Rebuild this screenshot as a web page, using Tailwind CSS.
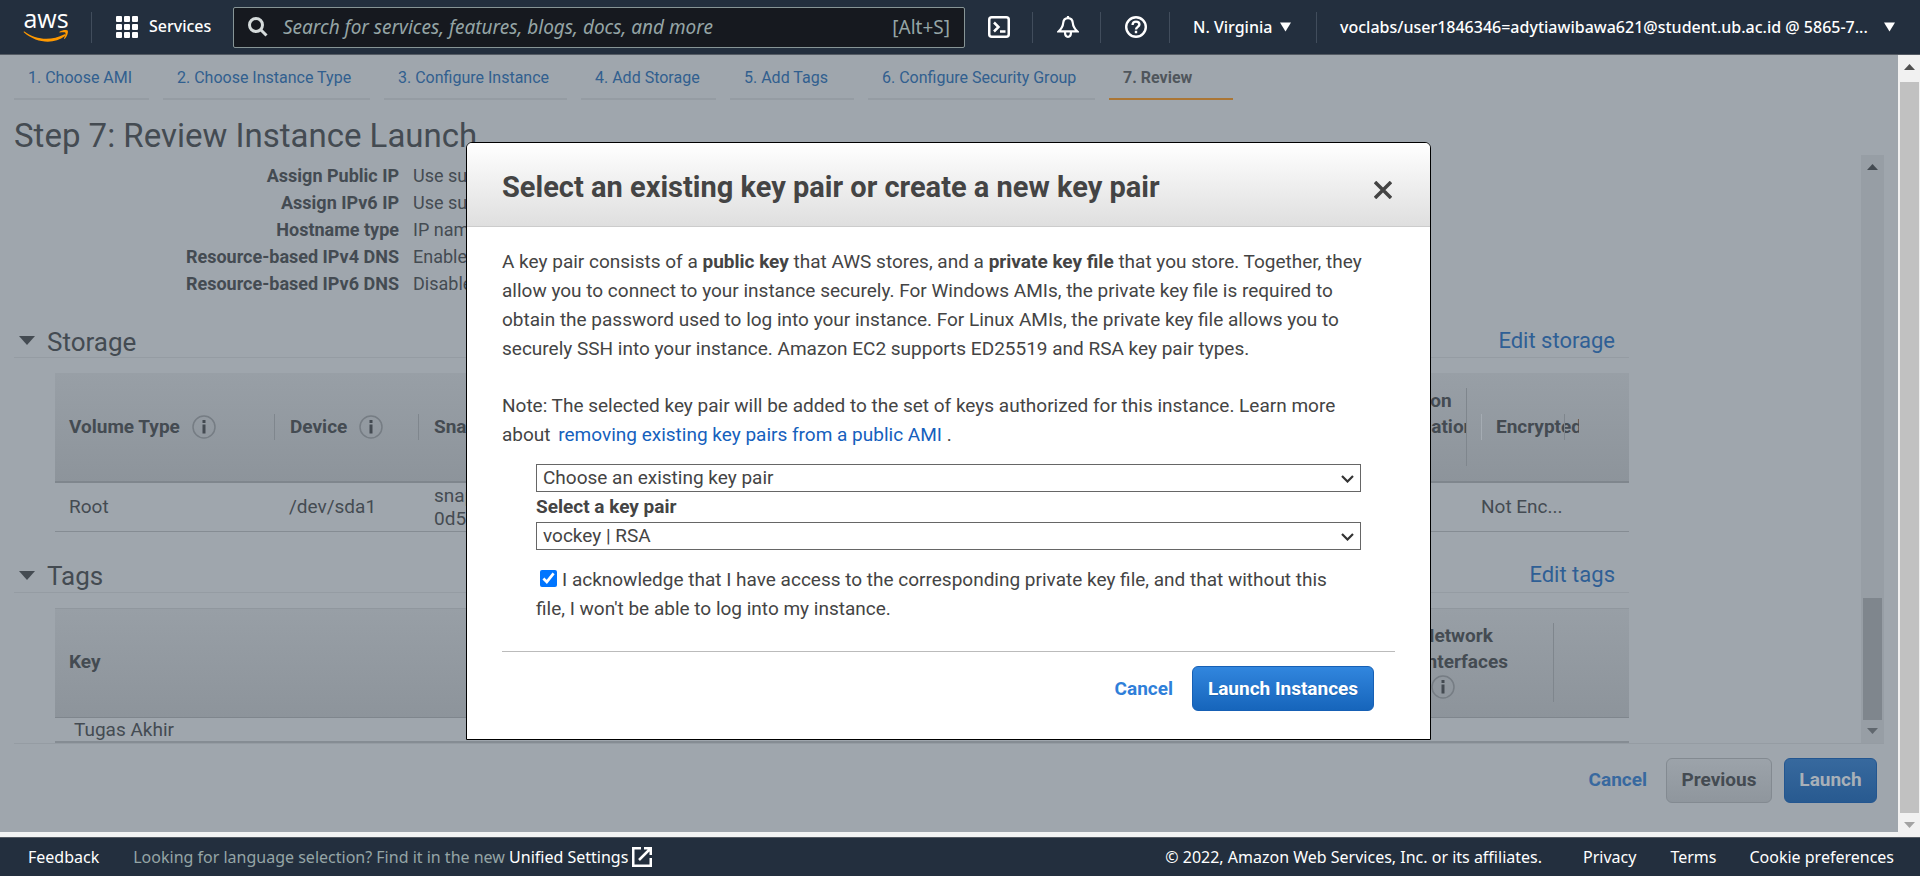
<!DOCTYPE html>
<html lang="en">
<head>
<meta charset="utf-8">
<meta name="viewport" content="width=device-width, initial-scale=1">
<title>Launch instance wizard | EC2 Management Console</title>
<script src="https://cdn.jsdelivr.net/npm/@tailwindcss/browser@4"></script>
</head>
<body class="flex h-screen min-h-[876px] flex-col overflow-hidden bg-[#f2f3f3] font-[Roboto,sans-serif] text-[19px] text-[#444b52]">

<svg class="hidden" aria-hidden="true">
  <symbol id="info" viewBox="0 0 24 24">
    <circle cx="12" cy="12" r="11" fill="none" stroke="#767d84" stroke-width="1.5"/>
    <rect x="10.5" y="5" width="3" height="3" fill="#444b52"/>
    <rect x="10.5" y="9.500" width="3" height="9" fill="#444b52"/>
  </symbol>
</svg>

<!-- Console navigation -->
<header class="flex h-[55px] shrink-0 items-center border-b border-[#545b64] bg-[#232f3e] font-['Noto_Sans',sans-serif] text-[16px] text-white">
  <a href="#" aria-label="AWS home" class="ml-[23px] block w-[46px]">
    <svg class="block h-[32px] w-[46px] overflow-visible" viewBox="0 0 46 32">
      <text x="23" y="17" text-anchor="middle" font-family="Open Sans, sans-serif" font-weight="500" font-size="25" fill="#fff">aws</text>
      <path d="M1.500 20.500C13 29.500 29 29.800 41 23.500c1.200-.6 2.200.6 1 1.500C31 33.500 14 32.500 1 21.500c-.6-.6-.2-1.400.5-1z" fill="#f90"/>
      <path d="M36.500 20.800c3-2 7.500-2 8.200-1.100s-.2 5.500-2.900 8c-.5.4-.9.100-.7-.4.700-1.700 1.900-4.700 1.300-5.500s-3.700-.5-5.400-.3c-.6 0-.8-.4-.5-.7z" fill="#f90"/>
    </svg>
  </a>
  <span class="ml-[22px] h-[31px] w-px bg-[#414d5c]"></span>
  <button class="ml-[24px] flex items-center gap-[11px] font-medium">
    <svg class="h-[22px] w-[22px]" viewBox="0 0 22 22" fill="#fff">
      <rect width="6" height="6" rx="1"/><rect x="8" width="6" height="6" rx="1"/><rect x="16" width="6" height="6" rx="1"/>
      <rect y="8" width="6" height="6" rx="1"/><rect x="8" y="8" width="6" height="6" rx="1"/><rect x="16" y="8" width="6" height="6" rx="1"/>
      <rect y="16" width="6" height="6" rx="1"/><rect x="8" y="16" width="6" height="6" rx="1"/><rect x="16" y="16" width="6" height="6" rx="1"/>
    </svg>
    <span class="w-[61px] pb-[2px]">Services</span>
  </button>
  <label class="ml-[23px] flex h-[41px] min-w-0 flex-1 items-center rounded-[2px] border border-[#879596] bg-[#16191f] px-[14px] text-[19px] text-[#95a5a6]">
    <svg class="h-[20px] w-[20px] shrink-0" viewBox="0 0 20 20" fill="none" stroke="#d5dbdb" stroke-width="3"><circle cx="8" cy="8" r="6.500"/><path d="M12.500 12.500l6 6"/></svg>
    <input type="text" aria-label="Search" placeholder="Search for services, features, blogs, docs, and more" class="ml-[15px] min-w-0 flex-1 bg-transparent italic outline-none placeholder:text-[#95a5a6]">
    <span>[Alt+S]</span>
  </label>
  <button aria-label="CloudShell" class="ml-[23px]">
    <svg class="block h-[22px] w-[22px]" viewBox="0 0 22 22" fill="none" stroke="#fff" stroke-width="2.500"><rect x="1.250" y="1.250" width="19.500" height="19.500" rx="2.500"/><path d="M6 6.500l4.500 4.500L6 15.500M12 15.500h5.500"/></svg>
  </button>
  <span class="ml-[22px] h-[31px] w-px bg-[#414d5c]"></span>
  <button aria-label="Notifications" class="ml-[24px]">
    <svg class="block h-[22px] w-[22px]" viewBox="0 0 22 22" fill="none" stroke="#fff" stroke-width="2.200"><path d="M11 2.200c-3.500 0-4.700 2.800-4.900 5.300C5.900 11 4.500 12.500 1.800 15.300h18.400c-2.700-2.800-4.100-4.300-4.300-7.800-.2-2.500-1.400-5.300-4.900-5.300zM8 16c0 2.500 1 4.800 3 4.800s3-2.300 3-4.800M11 0v2"/></svg>
  </button>
  <span class="ml-[21px] h-[31px] w-px bg-[#414d5c]"></span>
  <button aria-label="Help" class="ml-[24px]">
    <svg class="block h-[22px] w-[22px]" viewBox="0 0 22 22" fill="none" stroke="#fff" stroke-width="2.400"><circle cx="11" cy="11" r="9.800"/><path d="M7.600 9c0-2.200 1.400-3.400 3.400-3.400s3.400 1.200 3.400 3c0 2.200-3.400 2.400-3.400 4.900M11 14.800v2.400"/></svg>
  </button>
  <span class="ml-[22px] h-[31px] w-px bg-[#414d5c]"></span>
  <button class="ml-[23px] flex items-center gap-[8px] font-medium">
    <span class="w-[79px] whitespace-nowrap">N. Virginia</span>
    <svg class="h-[10px] w-[11px]" viewBox="0 0 11 10"><path d="M0 .5h11l-5.500 9z" fill="#fff"/></svg>
  </button>
  <span class="ml-[25px] h-[31px] w-px bg-[#414d5c]"></span>
  <button class="mr-[25px] ml-[23px] flex items-center gap-[8px] text-left font-medium">
    <span class="w-[536px] whitespace-nowrap">voclabs/user1846346=adytiawibawa621@student.ub.ac.id @ 5865-7...</span>
    <svg class="h-[10px] w-[11px]" viewBox="0 0 11 10"><path d="M0 .5h11l-5.500 9z" fill="#fff"/></svg>
  </button>
</header>

<div class="relative mb-[5px] flex min-h-0 flex-1">
  <main class="flex min-w-0 flex-1 flex-col bg-[#9fa6ad]">
    <nav class="ml-[14px] flex gap-[14px] pt-[10px] text-[16px] leading-[24px] whitespace-nowrap text-[#315f8f]">
      <a href="#" class="min-w-[135px] border-b-2 border-[#959ca3] px-[14px] pt-[1px] pb-[8px]">1. Choose AMI</a>
      <a href="#" class="min-w-[207px] border-b-2 border-[#959ca3] px-[14px] pt-[1px] pb-[8px]">2. Choose Instance Type</a>
      <a href="#" class="min-w-[183px] border-b-2 border-[#959ca3] px-[14px] pt-[1px] pb-[8px]">3. Configure Instance</a>
      <a href="#" class="min-w-[135px] border-b-2 border-[#959ca3] px-[14px] pt-[1px] pb-[8px]">4. Add Storage</a>
      <a href="#" class="min-w-[124px] border-b-2 border-[#959ca3] px-[14px] pt-[1px] pb-[8px]">5. Add Tags</a>
      <a href="#" class="min-w-[227px] border-b-2 border-[#959ca3] px-[14px] pt-[1px] pb-[8px]">6. Configure Security Group</a>
      <a href="#" aria-current="step" class="min-w-[124px] border-b-2 border-[#ab7635] px-[14px] pt-[1px] pb-[8px] font-bold text-[#50565c]">7. Review</a>
    </nav>
    <h1 class="ml-[14px] h-[55px] pt-[16px] text-[33px] leading-[40px]">Step 7: Review Instance Launch</h1>

    <div class="mr-[14px] ml-[14px] flex min-h-0 flex-1 border-b border-[#959ca3]">
      <div class="flex min-w-0 flex-1 flex-col overflow-hidden pr-[232px]">
        <dl class="grid shrink-0 grid-cols-[385px_1fr] gap-x-[14px] pt-[7px] text-[18px] leading-[27px]">
          <dt class="text-right font-bold">Assign Public IP</dt><dd>Use subnet setting (Enable)</dd>
          <dt class="text-right font-bold">Assign IPv6 IP</dt><dd>Use subnet setting (Enable)</dd>
          <dt class="text-right font-bold">Hostname type</dt><dd>IP name</dd>
          <dt class="text-right font-bold">Resource-based IPv4 DNS</dt><dd>Enabled</dd>
          <dt class="text-right font-bold">Resource-based IPv6 DNS</dt><dd>Disabled</dd>
        </dl>

        <div class="mt-[23px] flex h-[38px] shrink-0 items-center border-b border-[#959ca3] pt-[4px] pr-[14px]">
          <svg class="ml-[5px] h-[9px] w-[16px]" viewBox="0 0 16 9"><path d="M0 0h16L8 9z" fill="#444b52"/></svg>
          <h2 class="ml-[12px] flex-1 pt-[2px] text-[26px] leading-[32px]">Storage</h2>
          <a href="#" class="text-[22px] leading-[30px] text-[#2f5f95]">Edit storage</a>
        </div>
        <div class="mt-[15px] ml-[41px] shrink-0">
          <table class="w-full table-fixed border-collapse text-left">
            <colgroup><col class="w-[220px]"><col class="w-[144px]"><col><col class="w-[108px]"><col class="w-[162px]"></colgroup>
            <thead class="bg-linear-to-b from-[#989fa6] to-[#8d949b]">
              <tr class="h-[109px] border-b-2 border-[#7f868d]">
                <th scope="col" class="p-0"><div class="flex h-[26px] items-center gap-[12px] border-r border-[#7f868d] pl-[14px]">Volume Type <svg class="h-[24px] w-[24px]"><use href="#info"/></svg></div></th>
                <th scope="col" class="p-0"><div class="flex h-[26px] items-center gap-[12px] border-r border-[#7f868d] pl-[15px]">Device <svg class="h-[24px] w-[24px]"><use href="#info"/></svg></div></th>
                <th scope="col" class="p-0"><div class="pl-[15px]">Snapshot</div></th>
                <th scope="col" class="p-0"><div class="h-[78px] overflow-hidden border-r border-[#7f868d] pl-[12px] leading-[26px]">Delete on<br>Termination</div></th>
                <th scope="col" class="p-0 pl-[14px]"><div class="relative w-[98px] overflow-hidden border-l border-[#a5acb3] pl-[14px] leading-[26px]">Encrypted<span class="absolute inset-y-0 right-[14px] w-px bg-[#7f868d]"></span></div></th>
              </tr>
            </thead>
            <tbody>
              <tr class="h-[49px] border-b border-[#858c93]">
                <td class="py-0 pl-[14px]">Root</td>
                <td class="py-0 pl-[14px]">/dev/sda1</td>
                <td class="py-0 pl-[15px] leading-[23px]">snap-<br>0d5</td>
                <td></td>
                <td class="py-0 pl-[14px]">Not Enc...</td>
              </tr>
            </tbody>
          </table>
        </div>

        <div class="mt-[23px] flex h-[38px] shrink-0 items-center border-b border-[#959ca3] pt-[4px] pr-[14px]">
          <svg class="ml-[5px] h-[9px] w-[16px]" viewBox="0 0 16 9"><path d="M0 0h16L8 9z" fill="#444b52"/></svg>
          <h2 class="ml-[12px] flex-1 pt-[2px] text-[26px] leading-[32px]">Tags</h2>
          <a href="#" class="text-[22px] leading-[30px] text-[#2f5f95]">Edit tags</a>
        </div>
        <div class="mt-[15px] ml-[41px] shrink-0">
          <table class="w-full table-fixed border-collapse text-left">
            <colgroup><col><col class="w-[144px]"><col class="w-[75px]"></colgroup>
            <thead class="bg-linear-to-b from-[#989fa6] to-[#8d949b]">
              <tr class="h-[109px] border-t border-b border-t-[#90979e] border-b-[#7f868d]">
                <th scope="col" class="py-0 pl-[14px]">Key</th>
                <th scope="col" class="p-0"><div class="h-[79px] border-r border-[#7f868d] pl-[11px] leading-[26px]">Network<br>Interfaces<svg class="ml-[10px] h-[24px] w-[24px]"><use href="#info"/></svg></div></th>
                <th scope="col" class="p-0"></th>
              </tr>
            </thead>
            <tbody>
              <tr class="h-[24px] border-b-2 border-[#858c93]">
                <td class="py-0 pl-[19px] leading-[23px]">Tugas Akhir</td><td></td><td></td>
              </tr>
            </tbody>
          </table>
        </div>
      </div>
      <!-- Scroll bar of the review panel -->
      <div class="flex w-[23px] shrink-0 flex-col items-center bg-[#979ea5] pt-[9px] pb-[9px]">
        <svg class="h-[6px] w-[11px]" viewBox="0 0 11 6"><path d="M0 6h11L5.500 0z" fill="#444b52"/></svg>
        <div class="mt-auto mb-[8px] h-[122px] w-[19px] bg-[#7f868d]"></div>
        <svg class="h-[6px] w-[11px]" viewBox="0 0 11 6"><path d="M0 0h11L5.500 6z" fill="#60676e"/></svg>
      </div>
    </div>

    <div class="flex h-[88px] shrink-0 items-start justify-end pt-[14px] pr-[21px] font-bold">
      <button class="mr-[19px] h-[45px] text-[#38699f]">Cancel</button>
      <button class="mr-[12px] h-[45px] w-[106px] rounded-[6px] border border-[#838a91] bg-linear-to-b from-[#9ca3aa] to-[#8f969d] text-[#444b52]">Previous</button>
      <button class="h-[45px] w-[93px] rounded-[6px] border border-[#235690] bg-linear-to-b from-[#37699e] to-[#285a90] text-[#a8b0b8]">Launch</button>
    </div>
  </main>

  <!-- Scroll bar of the page -->
  <div class="-mb-[5px] flex w-[22px] shrink-0 flex-col items-center bg-[#f1f1f1] pt-[9px] pb-[9px]">
    <svg class="h-[6px] w-[11px]" viewBox="0 0 11 6"><path d="M0 6h11L5.500 0z" fill="#505050"/></svg>
    <div class="mt-[12px] mb-[9px] w-[19px] flex-1 bg-[#c1c1c1]"></div>
    <svg class="h-[6px] w-[11px]" viewBox="0 0 11 6"><path d="M0 0h11L5.500 6z" fill="#a3a3a3"/></svg>
  </div>

  <!-- Key pair dialog -->
  <div class="absolute inset-y-0 right-[23px] left-0 flex items-start justify-center pt-[87px]">
    <section role="dialog" aria-labelledby="dialog-title" class="w-[965px] max-w-full rounded-t-[6px] border border-black bg-white text-[#444]">
      <div class="flex h-[84px] items-center justify-between rounded-t-[5px] border-b border-[#ccc] bg-linear-to-b from-white to-[#dfdfdf] pr-[38px] pl-[35px]">
        <h2 id="dialog-title" class="pt-[5px] text-[29px] leading-[36px] font-bold">Select an existing key pair or create a new key pair</h2>
        <button aria-label="Close" class="pt-[10px]"><svg class="block h-[18px] w-[18px]" viewBox="0 0 18 18"><path d="M1 1l16 16M17 1l-16 16" stroke="#444" stroke-width="3.500"/></svg></button>
      </div>
      <div class="px-[35px] pt-[20px] pb-[28px] leading-[29px]">
        <p class="pr-[20px]">A key pair consists of a <b>public key</b> that AWS stores, and a <b>private key file</b> that you store. Together, they allow you to connect to your instance securely. For Windows AMIs, the private key file is required to obtain the password used to log into your instance. For Linux AMIs, the private key file allows you to securely SSH into your instance. Amazon EC2 supports ED25519 and RSA key pair types.</p>
        <p class="mt-[28px] pr-[20px]">Note: The selected key pair will be added to the set of keys authorized for this instance. Learn more about <a href="#" class="ml-[3px] text-[#1560bd]">removing existing key pairs from a public AMI</a> .</p>
        <div class="mt-[15px] mr-[34px] ml-[34px]">
          <div class="relative">
            <select aria-label="Key pair option" class="block h-[28px] w-full appearance-none border border-[#666] bg-white pl-[6px] leading-[24px]"><option>Choose an existing key pair</option></select>
            <svg class="pointer-events-none absolute top-[11px] right-[7px] h-[8px] w-[13px]" viewBox="0 0 13 8"><path d="M1 1l5.500 5.500L12 1" fill="none" stroke="#333" stroke-width="2.200"/></svg>
          </div>
          <label for="keypair" class="block h-[30px] leading-[30px] font-bold">Select a key pair</label>
          <div class="relative">
            <select id="keypair" class="block h-[28px] w-full appearance-none border border-[#666] bg-white pl-[6px] leading-[24px]"><option>vockey | RSA</option></select>
            <svg class="pointer-events-none absolute top-[11px] right-[7px] h-[8px] w-[13px]" viewBox="0 0 13 8"><path d="M1 1l5.500 5.500L12 1" fill="none" stroke="#333" stroke-width="2.200"/></svg>
          </div>
          <label class="mt-[15px] block pr-[15px]"><input type="checkbox" checked class="mr-[5px] ml-[4px] h-[17px] w-[17px] align-[-1px] accent-[#0075ff]">I acknowledge that I have access to the corresponding private key file, and that without this file, I won't be able to log into my instance.</label>
        </div>
        <div class="mt-[28px] flex items-center justify-end border-t border-[#bbb] pt-[14px] pr-[21px] font-bold">
          <button class="mr-[19px] text-[#2f7fd9]">Cancel</button>
          <button class="h-[45px] w-[182px] rounded-[6px] border border-[#1660b5] bg-linear-to-b from-[#3186de] to-[#1665bb] text-white text-shadow-2xs">Launch Instances</button>
        </div>
      </div>
    </section>
  </div>
</div>

<footer class="flex h-[39px] shrink-0 items-center border-t border-[#545b64] bg-[#232f3e] pr-[26px] pl-[28px] font-['Noto_Sans',sans-serif] text-[16px] whitespace-nowrap text-white">
  <button>Feedback</button>
  <p class="ml-[34px] flex-1 text-[#95a5a6]">Looking for language selection? Find it in the new <a href="#" class="inline-flex items-center gap-[4px] text-white">Unified Settings <svg class="h-[20px] w-[20px]" viewBox="0 0 20 20" fill="none" stroke="#fff" stroke-width="2.500"><path d="M9 1.250H1.250v17.500h17.500V11M12 1.250h6.750V8M18.500 1.500L7 13"/></svg></a></p>
  <span>© 2022, Amazon Web Services, Inc. or its affiliates.</span>
  <a href="#" class="ml-[41px]">Privacy</a>
  <a href="#" class="ml-[34px]">Terms</a>
  <a href="#" class="ml-[33px]">Cookie preferences</a>
</footer>
</body>
</html>
